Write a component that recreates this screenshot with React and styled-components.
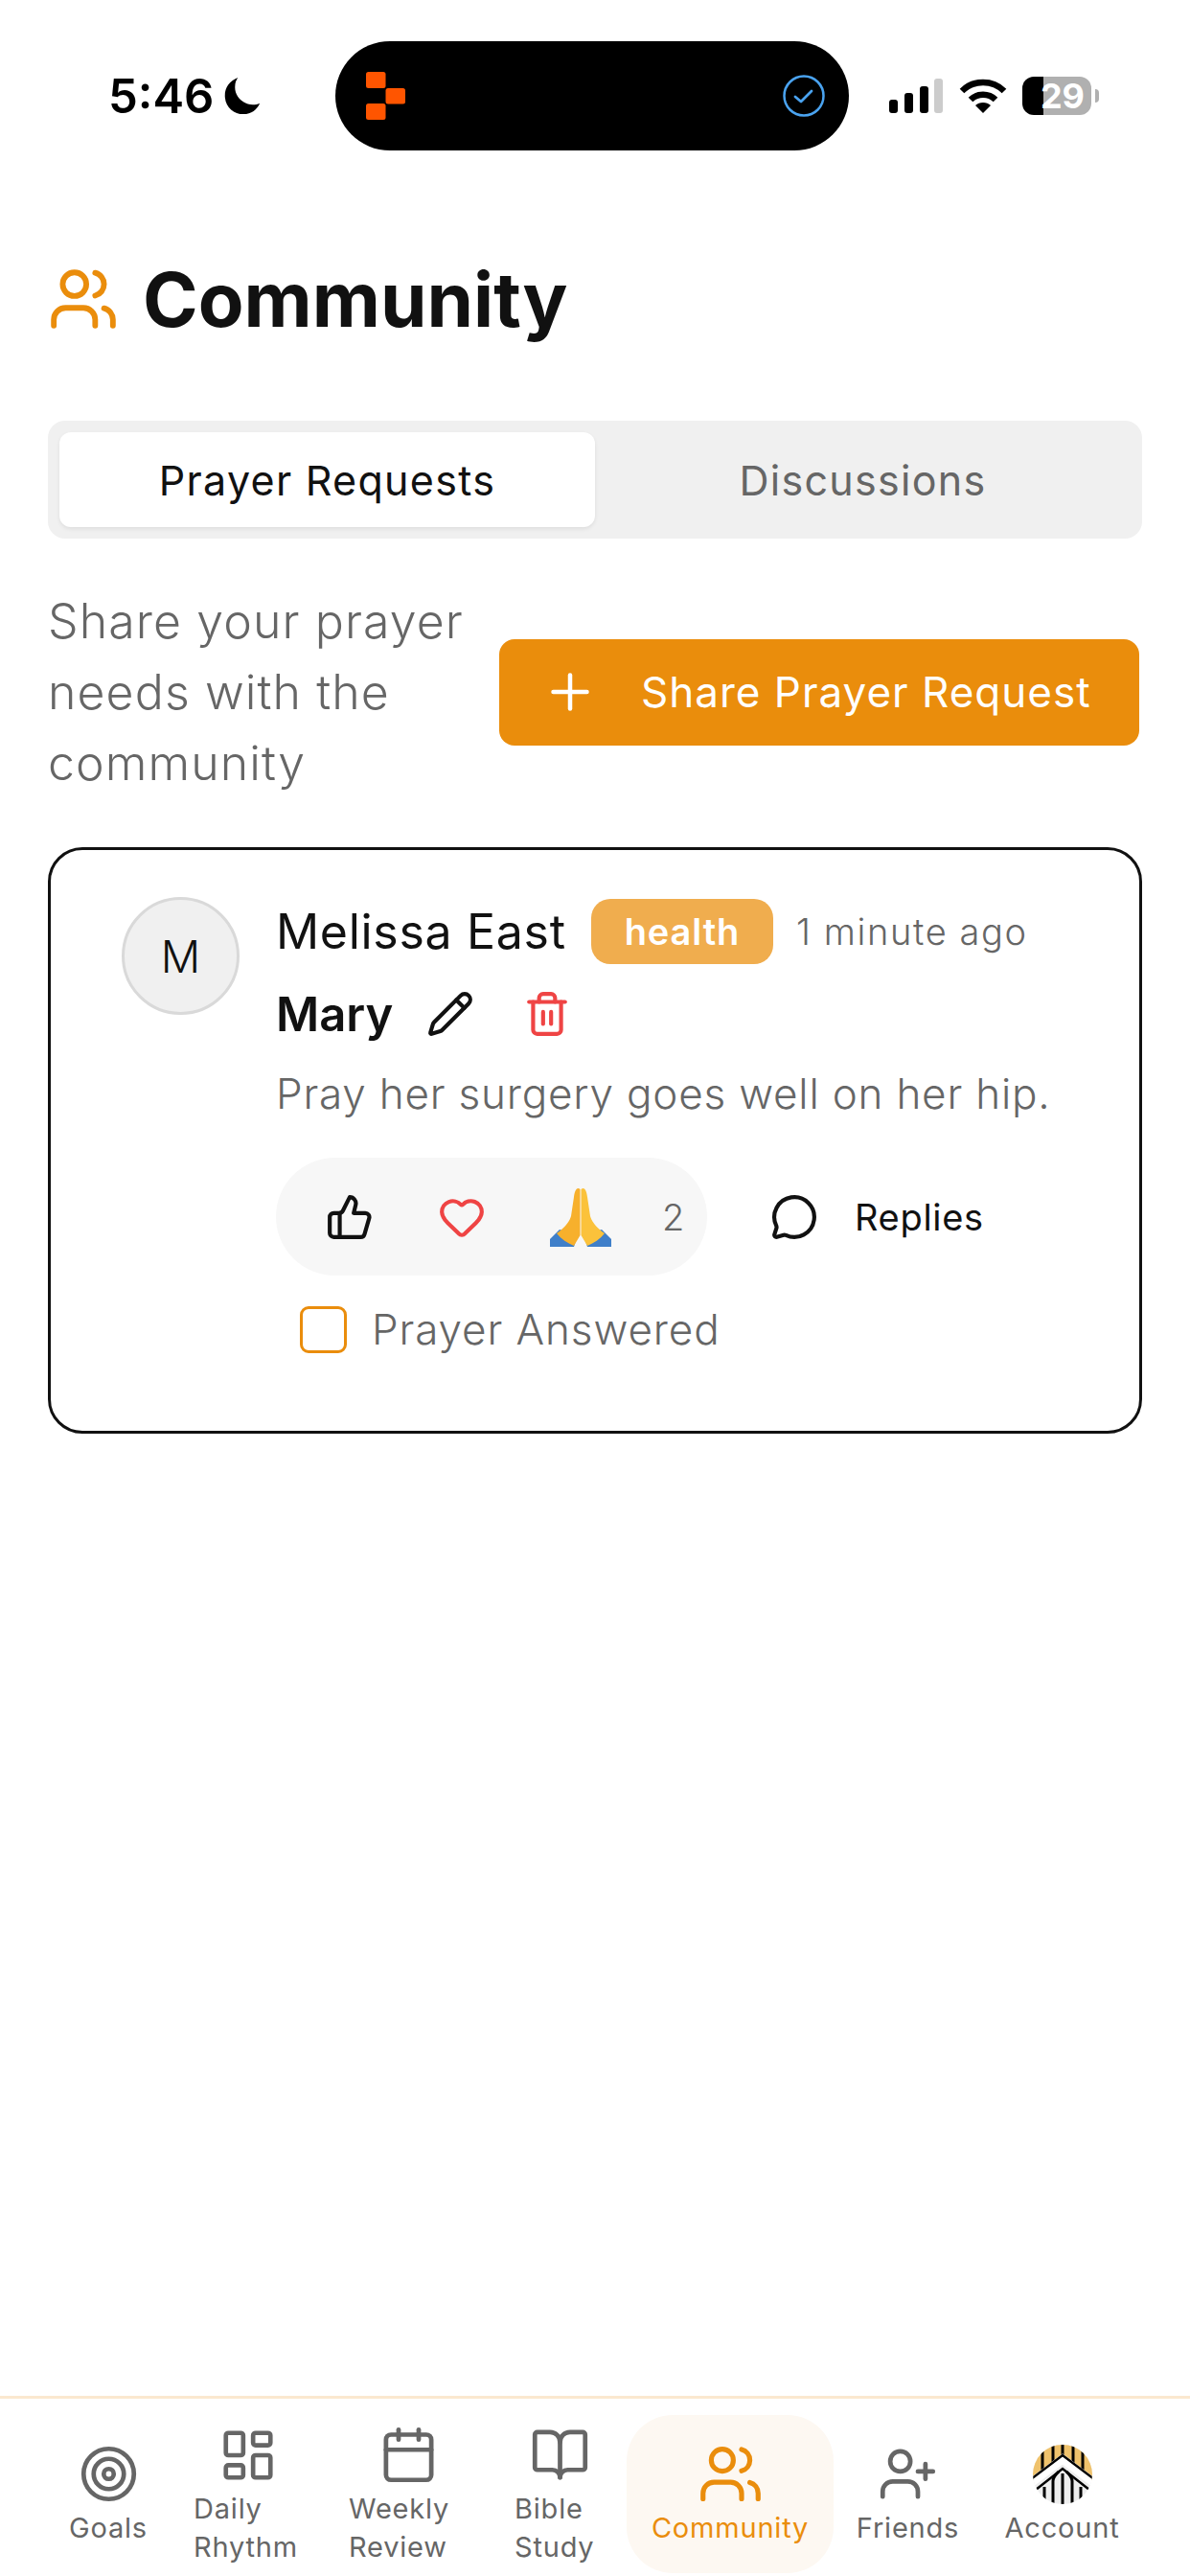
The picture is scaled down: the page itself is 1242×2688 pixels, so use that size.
import React from 'react';
import styled, { createGlobalStyle } from 'styled-components';
import {
  Users, Target, LayoutDashboard, Calendar, BookOpen, UserPlus,
  ThumbsUp, Heart, MessageCircle, Pencil, Trash2, Plus,
} from 'lucide-react';

const GlobalStyle = createGlobalStyle`
  html, body { margin: 0; padding: 0; background: #fff; }
  body { font-family: Inter, "Open Sans", "Liberation Sans", sans-serif; }
  * { box-sizing: border-box; }
`;

const ORANGE = '#ea8d0c';
const GREY = '#666';

function Moon() {
  return (
    <svg width="42" height="42" viewBox="0 0 42 44">
      <path d="M16 2 C6 6 1 14 2 24 C3 35 12 42 22 42 C31 42 37 37 40 30 C36 32 31 32 27 31 C18 28 12 20 13 11 C13 8 14 5 16 2 Z" fill="#000" />
    </svg>
  );
}

function Signal() {
  return (
    <svg width="57" height="36" viewBox="0 0 57 36">
      <rect x="0" y="22" width="9" height="14" rx="3" fill="#000" />
      <rect x="16" y="15" width="9" height="21" rx="3" fill="#000" />
      <rect x="32" y="8" width="9" height="28" rx="3" fill="#000" />
      <rect x="47" y="0" width="9" height="36" rx="3" fill="#ccc" />
    </svg>
  );
}

function Wifi() {
  return (
    <svg width="50" height="36" viewBox="0 0 50 36" fill="none" stroke="#000" strokeWidth="6.5">
      <path d="M3 13 C15 1 35 1 47 13" />
      <path d="M12 22 C19 15 31 15 38 22" />
      <path d="M25 36 L17 28 C21 24 29 24 33 28 Z" fill="#000" stroke="none" />
    </svg>
  );
}

function Logo() {
  return (
    <svg width="41" height="50" viewBox="0 0 41 50">
      <rect x="0" y="0" width="20.5" height="17" rx="2.5" fill="#ff5500" />
      <rect x="20.5" y="17" width="20.5" height="16.5" rx="2.5" fill="#ff5500" />
      <rect x="0" y="33" width="20.5" height="17" rx="2.5" fill="#ff5500" />
    </svg>
  );
}

function CheckCircle() {
  return (
    <svg width="44" height="44" viewBox="0 0 44 44" fill="none" stroke="#4aa3f0">
      <circle cx="22" cy="22" r="20.5" strokeWidth="2.5" />
      <path d="M13 23 L19 28 L30 17" strokeWidth="2.8" strokeLinecap="round" strokeLinejoin="round" />
    </svg>
  );
}

// folded hands, there is no colour emoji font to lean on
function PrayingHands() {
  return (
    <svg width="64" height="62" viewBox="0 0 64 62">
      <path d="M10 44 L0 54 V62 H25 L29 50 Z" fill="#3f7fc9" />
      <path d="M54 44 L64 54 V62 H39 L35 50 Z" fill="#3f7fc9" />
      <path d="M31.5 2 C28 -1 26 3 25 10 L22 30 C20 37 14 43 7 48 C12 54 18 58 25 61 L31.5 50 Z" fill="#f7b02c" />
      <path d="M32.5 2 C36 -1 38 3 39 10 L42 30 C44 37 50 43 57 48 C52 54 46 58 39 61 L32.5 50 Z" fill="#fbc23b" />
    </svg>
  );
}

function AccountBadge() {
  return (
    <svg width="62" height="62" viewBox="0 0 62 62">
      <defs>
        <clipPath id="badge"><circle cx="31" cy="31" r="31" /></clipPath>
      </defs>
      <g clipPath="url(#badge)">
        <rect width="62" height="62" fill="#eeeeee" />
        <path d="M0 0 H62 V37 L31 15 L0 37 Z" fill="#efc26c" />
        <g stroke="#000" strokeWidth="3" fill="none">
          <path d="M10 2 V26 M21 0 V20 M31 0 V14 M42 0 V20 M52 2 V26" />
          <path d="M12 62 V44 M21 62 V38 C21 34 24 31 27 28 M31 62 V30 M41 62 V38 C41 34 38 31 35 28 M50 62 V44" />
        </g>
        <path d="M-2 40 L31 15 L64 40" fill="none" stroke="#fff" strokeWidth="9" />
        <path d="M-2 36 L31 11 L64 36" fill="none" stroke="#000" strokeWidth="2.5" />
        <path d="M3 47 L31 25 L59 47" fill="none" stroke="#000" strokeWidth="2.5" />
      </g>
    </svg>
  );
}

const NAV_ITEMS = [
  { label: 'Goals', icon: Target, size: 63, left: 56, width: 114 },
  { label: 'Daily Rhythm', icon: LayoutDashboard, size: 62, left: 32, width: 114, wrap: true },
  { label: 'Weekly Review', icon: Calendar, size: 63, left: 48, width: 124, wrap: true },
  { label: 'Bible Study', icon: BookOpen, size: 63, left: 49, width: 94, wrap: true },
  { label: 'Community', icon: Users, size: 69, left: 23, width: 216, active: true },
  { label: 'Friends', icon: UserPlus, size: 63, left: 25, width: 105 },
  { label: 'Account', left: 50, width: 117 },
];

function App() {
  return (
    <Page>
      <GlobalStyle />
      <StatusBar>
        <TimeGroup>
          <Time>5:46</Time>
          <Moon />
        </TimeGroup>
        <Island>
          <Logo />
          <CheckCircle />
        </Island>
        <SystemIcons>
          <Signal />
          <Wifi />
          <Battery>
            <BatteryLevel>29</BatteryLevel>
          </Battery>
          <BatteryNub />
        </SystemIcons>
      </StatusBar>

      <Main>
        <Header>
          <Users size={74} color={ORANGE} strokeWidth={1.9} />
          <Title>Community</Title>
        </Header>

        <Tabs>
          <Tab $active>Prayer Requests</Tab>
          <Tab>Discussions</Tab>
        </Tabs>

        <ShareRow>
          <Description>Share your prayer needs with the community</Description>
          <ShareButton>
            <Plus size={60} strokeWidth={1.8} />
            <span>Share Prayer Request</span>
          </ShareButton>
        </ShareRow>

        <Card>
          <Avatar>M</Avatar>
          <CardBody>
            <MetaRow>
              <Author>Melissa East</Author>
              <Badge>health</Badge>
              <TimeAgo>1 minute ago</TimeAgo>
            </MetaRow>
            <SubjectRow>
              <Subject>Mary</Subject>
              <Pencil size={50} color="#111" strokeWidth={2} />
              <Trash2 size={50} color="#ef4444" strokeWidth={2} />
            </SubjectRow>
            <Message>Pray her surgery goes well on her hip.</Message>
            <ReactionRow>
              <Reactions>
                <ThumbsUp size={50} color="#111" strokeWidth={2} />
                <Heart size={50} color="#ef4444" strokeWidth={2} />
                <PrayingHands />
                <Count>2</Count>
              </Reactions>
              <Replies>
                <MessageCircle size={50} color="#111" strokeWidth={2} />
                <span>Replies</span>
              </Replies>
            </ReactionRow>
            <AnsweredRow>
              <CheckBox />
              <span>Prayer Answered</span>
            </AnsweredRow>
          </CardBody>
        </Card>
      </Main>

      <Nav>
        {NAV_ITEMS.map(({ label, icon: Icon, size, left, width, wrap, active }) => (
          <NavItem key={label} $left={left} $width={width} $active={active}>
            <NavIcon>
              {Icon ? <Icon size={size} strokeWidth={1.8} /> : <AccountBadge />}
            </NavIcon>
            <NavLabel $wrap={wrap}>{label}</NavLabel>
          </NavItem>
        ))}
      </Nav>
    </Page>
  );
}

const Page = styled.div`
  display: flex;
  flex-direction: column;
  width: 1242px;
  height: 2688px;
  overflow: hidden;
  background: #fff;
`;

const StatusBar = styled.div`
  display: flex;
  align-items: center;
  height: 157px;
  padding: 43px 0 0 113px;
`;

const TimeGroup = styled.div`
  display: flex;
  align-items: center;
  gap: 9px;
  width: 237px;
`;

const Time = styled.span`
  font-size: 49px;
  font-weight: 600;
  color: #000;
`;

const Island = styled.div`
  display: flex;
  align-items: center;
  justify-content: space-between;
  width: 536px;
  height: 114px;
  padding: 0 25px 0 32px;
  border-radius: 57px;
  background: #000;
`;

const SystemIcons = styled.div`
  display: flex;
  align-items: center;
  gap: 16px;
  margin-left: 42px;
`;

const Battery = styled.div`
  display: flex;
  align-items: center;
  justify-content: flex-end;
  width: 72px;
  height: 40px;
  padding-right: 7px;
  border-radius: 12px;
  background: linear-gradient(90deg, #000 0 22px, #b0b0b0 22px);
`;

const BatteryLevel = styled.span`
  font-size: 36px;
  font-weight: 700;
  color: #fff;
`;

const BatteryNub = styled.div`
  width: 4px;
  height: 14px;
  margin-left: -12px;
  border-radius: 0 4px 4px 0;
  background: #b0b0b0;
`;

const Main = styled.main`
  flex: 1;
  padding: 0 50px;
`;

const Header = styled.header`
  display: flex;
  align-items: center;
  gap: 25px;
  height: 84px;
  margin-top: 113px;
`;

const Title = styled.h1`
  margin: 0;
  font-size: 78px;
  font-weight: 700;
  color: #111;
`;

const Tabs = styled.div`
  display: grid;
  grid-template-columns: 559px 1fr;
  height: 123px;
  margin-top: 85px;
  padding: 12px;
  border-radius: 18px;
  background: #f0f0f0;
`;

const Tab = styled.div`
  display: flex;
  align-items: center;
  justify-content: center;
  height: 99px;
  border-radius: 12px;
  font-size: 43px;
  font-weight: 400;
  letter-spacing: 1.3px;
  color: ${(p) => (p.$active ? '#111' : GREY)};
  background: ${(p) => (p.$active ? '#fff' : 'transparent')};
  box-shadow: ${(p) => (p.$active ? '0 2px 4px rgba(0, 0, 0, 0.08)' : 'none')};
`;

const ShareRow = styled.div`
  display: flex;
  align-items: center;
  justify-content: space-between;
  margin-top: 49px;
  padding-right: 3px;
`;

const Description = styled.p`
  width: 450px;
  margin: 0;
  font-size: 50px;
  font-weight: 300;
  letter-spacing: 1.1px;
  line-height: 74px;
  color: ${GREY};
`;

const ShareButton = styled.button`
  display: flex;
  align-items: center;
  gap: 44px;
  width: 668px;
  height: 111px;
  padding: 0 0 0 44px;
  border: 0;
  border-radius: 16px;
  font-family: inherit;
  font-size: 44px;
  font-weight: 400;
  letter-spacing: 1px;
  color: #fff;
  background: ${ORANGE};
`;

const Card = styled.article`
  display: flex;
  align-items: flex-start;
  gap: 38px;
  height: 612px;
  margin-top: 51px;
  padding: 49px 0 0 74px;
  border: 3px solid #111;
  border-radius: 36px;
`;

const Avatar = styled.div`
  display: flex;
  flex: none;
  align-items: center;
  justify-content: center;
  width: 123px;
  height: 123px;
  border: 3px solid #d9d9d9;
  border-radius: 50%;
  font-size: 46px;
  font-weight: 300;
  color: #111;
  background: #f0f0f0;
`;

const CardBody = styled.div`
  display: flex;
  flex-direction: column;
`;

const MetaRow = styled.div`
  display: flex;
  align-items: center;
  height: 68px;
  margin-top: 2px;
`;

const Author = styled.span`
  width: 329px;
  font-size: 50px;
  font-weight: 400;
  letter-spacing: 0.7px;
  color: #111;
`;

const Badge = styled.span`
  display: flex;
  align-items: center;
  justify-content: center;
  width: 190px;
  height: 68px;
  border-radius: 20px;
  font-size: 38px;
  font-weight: 600;
  letter-spacing: 0.9px;
  color: #fff;
  background: #f0ad4e;
`;

const TimeAgo = styled.span`
  margin-left: 24px;
  font-size: 38px;
  font-weight: 300;
  letter-spacing: 1.6px;
  color: ${GREY};
`;

const SubjectRow = styled.div`
  display: flex;
  align-items: center;
  gap: 35px;
  height: 60px;
  margin-top: 22px;

  svg:last-child {
    margin-left: 16px;
  }
`;

const Subject = styled.span`
  font-size: 49px;
  font-weight: 600;
  color: #111;
`;

const Message = styled.p`
  margin: 25px 0 0;
  font-size: 44px;
  font-weight: 300;
  letter-spacing: 0.8px;
  line-height: 56px;
  white-space: nowrap;
  color: ${GREY};
`;

const ReactionRow = styled.div`
  display: flex;
  align-items: center;
  margin-top: 39px;
`;

const Reactions = styled.div`
  display: flex;
  align-items: center;
  gap: 67px;
  width: 450px;
  height: 123px;
  padding-left: 52px;
  border-radius: 62px;
  background: #f7f7f7;
`;

const Count = styled.span`
  margin-left: -14px;
  font-size: 38px;
  font-weight: 300;
  color: ${GREY};
`;

const Replies = styled.div`
  display: flex;
  align-items: center;
  gap: 38px;
  margin-left: 66px;
  font-size: 38px;
  font-weight: 400;
  letter-spacing: 0.7px;
  color: #111;
`;

const AnsweredRow = styled.label`
  display: flex;
  align-items: center;
  gap: 26px;
  margin: 29px 0 0 25px;
  font-size: 44px;
  font-weight: 300;
  letter-spacing: 0.9px;
  color: ${GREY};
`;

const CheckBox = styled.span`
  display: block;
  width: 49px;
  height: 49px;
  border: 3px solid ${ORANGE};
  border-radius: 9px;
`;

const Nav = styled.nav`
  display: flex;
  align-items: stretch;
  height: 188px;
  padding: 17px 0 3px;
  border-top: 3px solid #fbe8cf;
`;

const NavItem = styled.div`
  display: flex;
  flex: none;
  flex-direction: column;
  align-items: center;
  justify-content: center;
  gap: 2px;
  width: ${(p) => p.$width}px;
  margin-left: ${(p) => p.$left}px;
  border-radius: 48px;
  color: ${(p) => (p.$active ? ORANGE : GREY)};
  background: ${(p) => (p.$active ? '#fdf8f2' : 'transparent')};
`;

const NavIcon = styled.div`
  display: flex;
  align-items: center;
  justify-content: center;
  height: 68px;
`;

const NavLabel = styled.span`
  align-self: ${(p) => (p.$wrap ? 'flex-start' : 'center')};
  font-size: 29px;
  font-weight: 400;
  letter-spacing: 0.8px;
  line-height: 40px;
  white-space: ${(p) => (p.$wrap ? 'normal' : 'nowrap')};
`;

export default App;
